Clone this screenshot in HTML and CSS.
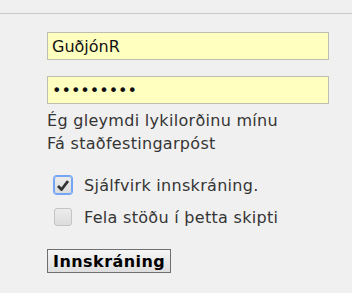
FILE: index.html
```html
<!DOCTYPE html>
<html lang="is">
<head>
    <meta charset="UTF-8">
    <title>Innskráning</title>
    <link rel="stylesheet" href="styles.css">
</head>
<body>

<div class="topline"></div>

<form class="login">
    <input class="field" type="text" value="GuðjónR">
    <input class="field" type="password" value="leyndarmá">

    <div class="links">
        <a href="#">Ég gleymdi lykilorðinu mínu</a>
        <a href="#">Fá staðfestingarpóst</a>
    </div>

    <div class="options">
        <label class="opt">
            <span class="box checked">
                <svg width="12" height="11" viewBox="0 0 12 11"><path d="M1 6 L4.5 9.5 L11 1" fill="none" stroke="#333" stroke-width="2.8"/></svg>
            </span>
            Sjálfvirk innskráning.
        </label>
        <label class="opt">
            <span class="box"></span>
            Fela stöðu í þetta skipti
        </label>
    </div>

    <button type="button" class="submit">Innskráning</button>
</form>

</body>
</html>
```

FILE: styles.css
```css
body {
    margin: 0;
    background: #f0f0f0;
    font-family: "DejaVu Sans", Verdana, sans-serif;
    font-size: 16px;
    letter-spacing: 0.3px;
    color: #353535;
}

.topline {
    margin-top: 13px;
    height: 1px;
    background: #c8c8c8;
}

.login {
    padding: 18px 23px 0 47px;
    display: flex;
    flex-direction: column;
}

.field {
    box-sizing: border-box;
    height: 28px;
    margin: 0 0 16px 0;
    padding: 0 4px;
    border: 1px solid #bdbdb0;
    background: #ffffc0;
    font-family: inherit;
    font-size: 16px;
    color: #111;
    outline: none;
}

.field + .field {
    margin-bottom: 0;
}

.links {
    display: flex;
    flex-direction: column;
    line-height: 23px;
    padding-top: 5px;
}

.links a {
    color: #353535;
    text-decoration: none;
}

.options {
    padding-top: 20px;
    display: flex;
    flex-direction: column;
    gap: 12px;
}

.opt {
    display: flex;
    align-items: center;
    gap: 11px;
    padding-left: 6px;
    height: 20px;
}

.box {
    box-sizing: border-box;
    width: 18px;
    height: 18px;
    margin: 0 1px;
    border: 1px solid #c4c4c4;
    border-radius: 3px;
    background: linear-gradient(#ececec, #dcdcdc);
    display: flex;
    align-items: center;
    justify-content: center;
}

.box.checked {
    border-color: #74a4f4;
    box-shadow: 0 0 0 1px #74a4f4;
}

.submit {
    align-self: flex-start;
    margin-top: 22px;
    height: 24px;
    padding: 0 5px;
    border: 1px solid #6f6f6f;
    background: linear-gradient(#f6f6f6, #dedede);
    font-family: inherit;
    font-size: 16px;
    font-weight: bold;
    letter-spacing: 0.45px;
    color: #000;
}
```
